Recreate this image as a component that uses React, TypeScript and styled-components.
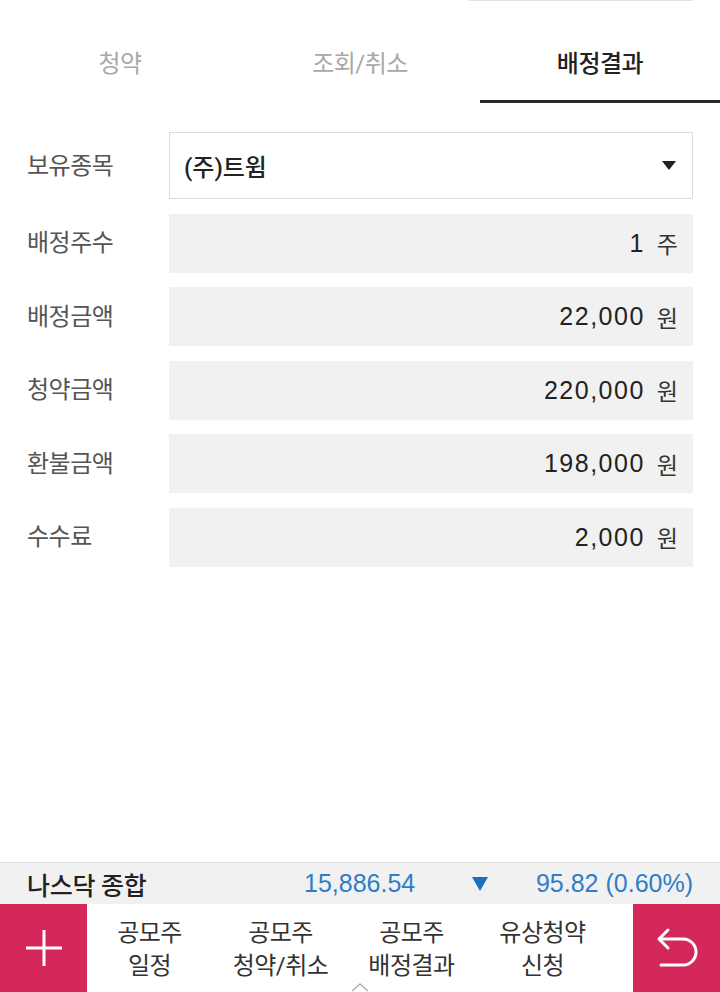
import React from "react";
import styled, { createGlobalStyle } from "styled-components";

const Global = createGlobalStyle`
  html, body { margin: 0; padding: 0; background: #fff; }
  body { font-family: Roboto, "Noto Sans CJK KR", "Noto Sans", sans-serif; -webkit-font-smoothing: antialiased; }
  * { box-sizing: border-box; }
`;

const NUM_FONT = `"Liberation Sans", "Noto Sans CJK KR", sans-serif`;

const Page = styled.div`
  width: 720px;
  height: 992px;
  display: flex;
  flex-direction: column;
  overflow: hidden;
  background: #fff;
`;

const TopLine = styled.div`
  margin-left: 469px;
  width: 224px;
  height: 1px;
  background: #e2e2e2;
  flex-shrink: 0;
`;

const Tabs = styled.div`
  display: flex;
  height: 102px;
  flex-shrink: 0;
`;

const Tab = styled.div<{ $active?: boolean }>`
  flex: 1;
  display: flex;
  align-items: center;
  justify-content: center;
  padding-top: 22px;
  font-size: 24px;
  font-weight: ${p => (p.$active ? 500 : 400)};
  color: ${p => (p.$active ? "#222" : "#a8a8a8")};
  border-bottom: 3px solid ${p => (p.$active ? "#2a2a2a" : "transparent")};
  letter-spacing: -0.5px;
`;

const Form = styled.div`
  display: flex;
  flex-direction: column;
  gap: 14.5px;
  padding: 29px 27px 0 27px;
  flex: 1;
`;

const Row = styled.div`
  display: flex;
  align-items: center;
`;

const Label = styled.div`
  width: 142px;
  font-size: 24px;
  color: #555;
  margin-top: -5px;
  letter-spacing: -0.5px;
`;

const Select = styled.div`
  flex: 1;
  height: 67px;
  border: 1px solid #dcdcdc;
  display: flex;
  align-items: center;
  justify-content: space-between;
  padding: 0 16px 0 14px;
  font-size: 24px;
  font-weight: 500;
  color: #222;
`;

const Caret = styled.span`
  width: 0;
  height: 0;
  border-left: 7px solid transparent;
  border-right: 7px solid transparent;
  border-top: 9px solid #222;
`;

const Value = styled.div`
  flex: 1;
  height: 59px;
  background: #f1f1f1;
  display: flex;
  align-items: center;
  justify-content: flex-end;
  gap: 12px;
  padding-right: 15px;
  color: #222;
`;

const Num = styled.span`
  font-family: ${NUM_FONT};
  font-size: 25px;
  letter-spacing: 1.5px;
`;

const Unit = styled.span`
  font-size: 23px;
  color: #333;
`;

const IndexBar = styled.div`
  height: 42px;
  flex-shrink: 0;
  border-top: 1px solid #dedede;
  background: #f1f1f1;
  display: grid;
  grid-template-columns: 277px 168px 50px 1fr;
  align-items: center;
  padding: 0 27px;
  font-size: 25px;
`;

const IndexName = styled.div`
  font-weight: 500;
  color: #222;
  letter-spacing: -0.3px;
`;

const IndexNum = styled.div<{ $right?: boolean }>`
  font-family: ${NUM_FONT};
  color: #2e7dc9;
  text-align: ${p => (p.$right ? "right" : "left")};
`;

const DownTri = styled.span`
  width: 0;
  height: 0;
  border-left: 8px solid transparent;
  border-right: 8px solid transparent;
  border-top: 14px solid #1d6fbf;
`;

const Nav = styled.div`
  height: 88px;
  flex-shrink: 0;
  display: grid;
  grid-template-columns: 87px repeat(4, 131px) 1fr 87px;
  position: relative;
`;

const RedBtn = styled.div`
  background: #d5285a;
  display: flex;
  align-items: center;
  justify-content: center;
`;

const NavItem = styled.div`
  display: flex;
  flex-direction: column;
  align-items: center;
  justify-content: center;
  padding: 3px 6px 0 0;
  font-size: 24px;
  line-height: 33px;
  color: #333;
  text-align: center;
  letter-spacing: -0.5px;
`;

const UpChevron = styled.svg`
  position: absolute;
  left: 351px;
  bottom: 0;
`;

export default function App() {
  const rows = [
    { label: "배정주수", value: "1", unit: "주" },
    { label: "배정금액", value: "22,000", unit: "원" },
    { label: "청약금액", value: "220,000", unit: "원" },
    { label: "환불금액", value: "198,000", unit: "원" },
    { label: "수수료", value: "2,000", unit: "원" },
  ];
  return (
    <Page>
      <Global />
      <TopLine />
      <Tabs>
        <Tab>청약</Tab>
        <Tab>조회/취소</Tab>
        <Tab $active>배정결과</Tab>
      </Tabs>
      <Form>
        <Row>
          <Label>보유종목</Label>
          <Select>
            <span>(주)트윔</span>
            <Caret />
          </Select>
        </Row>
        {rows.map(r => (
          <Row key={r.label}>
            <Label>{r.label}</Label>
            <Value>
              <Num>{r.value}</Num>
              <Unit>{r.unit}</Unit>
            </Value>
          </Row>
        ))}
      </Form>
      <IndexBar>
        <IndexName>나스닥 종합</IndexName>
        <IndexNum>15,886.54</IndexNum>
        <DownTri />
        <IndexNum $right>95.82 (0.60%)</IndexNum>
      </IndexBar>
      <Nav>
        <RedBtn>
          <svg width="40" height="40" viewBox="0 0 40 40">
            <path d="M20 2 V38 M2 20 H38" stroke="#fff" strokeWidth="3" fill="none" />
          </svg>
        </RedBtn>
        <NavItem><span>공모주</span><span>일정</span></NavItem>
        <NavItem><span>공모주</span><span>청약/취소</span></NavItem>
        <NavItem><span>공모주</span><span>배정결과</span></NavItem>
        <NavItem><span>유상청약</span><span>신청</span></NavItem>
        <div />
        <RedBtn>
          <svg width="44" height="44" viewBox="0 0 44 44">
            <path d="M4 13 H28 A13 13 0 0 1 28 39 H6 M13 4 L4 13 L13 22" stroke="#fff" strokeWidth="3" fill="none" strokeLinejoin="round" strokeLinecap="round" />
          </svg>
        </RedBtn>
        <UpChevron width="18" height="10" viewBox="0 0 18 10">
          <path d="M1 9 L9 2 L17 9" stroke="#b0b0b0" strokeWidth="1.5" fill="none" />
        </UpChevron>
      </Nav>
    </Page>
  );
}
